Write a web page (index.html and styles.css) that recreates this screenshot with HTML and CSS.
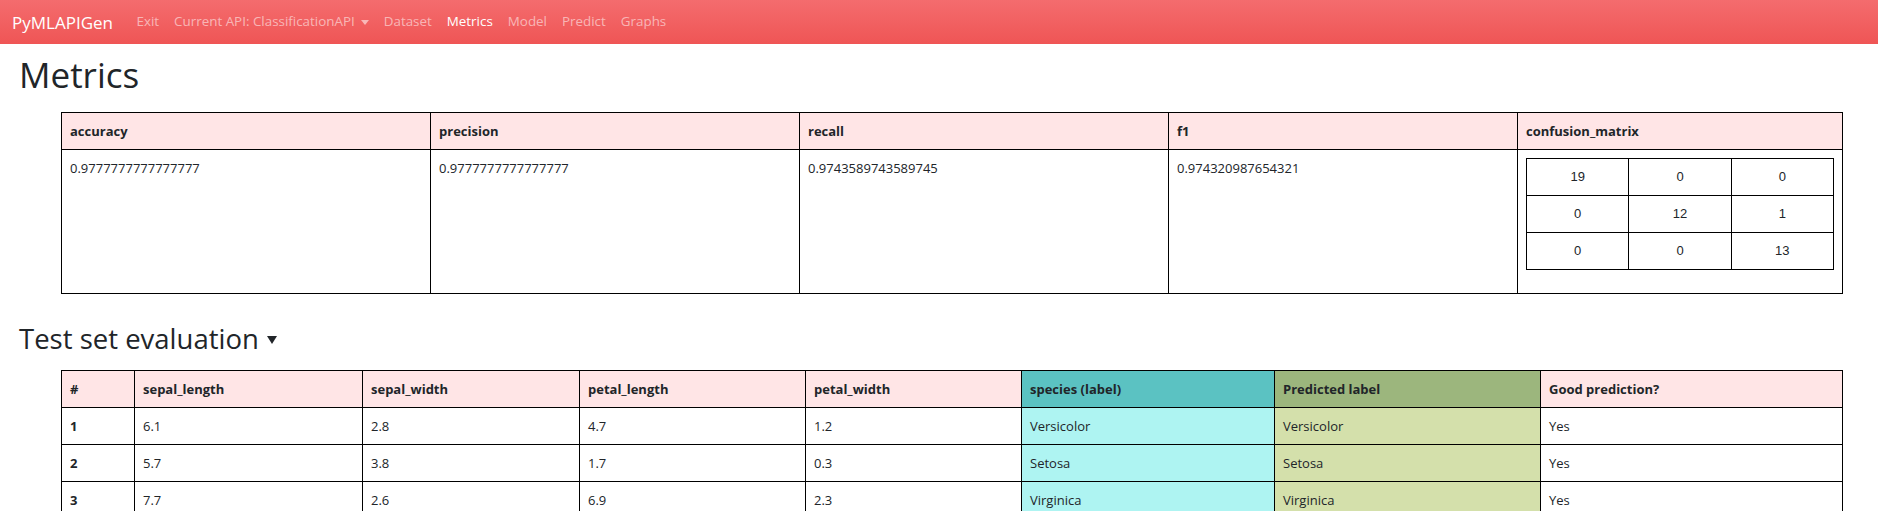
FILE: index.html
```html
<!DOCTYPE html>
<html lang="en">
<head>
<meta charset="utf-8">
<title>PyMLAPIGen - Metrics</title>
<link rel="stylesheet" href="styles.css">
</head>
<body>
<nav class="navbar">
  <a class="brand" href="#">PyMLAPIGen</a>
  <ul class="nav">
    <li><a class="nav-link" href="#">Exit</a></li>
    <li><a class="nav-link dropdown-toggle" href="#">Current API: ClassificationAPI</a></li>
    <li><a class="nav-link" href="#">Dataset</a></li>
    <li><a class="nav-link active" href="#">Metrics</a></li>
    <li><a class="nav-link" href="#">Model</a></li>
    <li><a class="nav-link" href="#">Predict</a></li>
    <li><a class="nav-link" href="#">Graphs</a></li>
  </ul>
</nav>
<main class="content">
  <h1 class="page-title">Metrics</h1>
  <table class="grid metrics">
    <colgroup>
      <col class="m-col">
      <col class="m-col">
      <col class="m-col">
      <col class="m-col-f1">
      <col class="m-col-cm">
    </colgroup>
    <thead>
      <tr>
        <th>accuracy</th>
        <th>precision</th>
        <th>recall</th>
        <th>f1</th>
        <th>confusion_matrix</th>
      </tr>
    </thead>
    <tbody>
      <tr>
        <td>0.9777777777777777</td>
        <td>0.9777777777777777</td>
        <td>0.9743589743589745</td>
        <td>0.974320987654321</td>
        <td>
          <table class="confusion">
            <tbody>
              <tr><td>19</td><td>0</td><td>0</td></tr>
              <tr><td>0</td><td>12</td><td>1</td></tr>
              <tr><td>0</td><td>0</td><td>13</td></tr>
            </tbody>
          </table>
        </td>
      </tr>
    </tbody>
  </table>

  <h2 class="section-title">Test set evaluation <span class="toggle-caret"></span></h2>
  <table class="grid evaluation">
    <colgroup>
      <col class="e-idx">
      <col class="e-sl">
      <col class="e-sw">
      <col class="e-pl">
      <col class="e-pw">
      <col class="e-sp">
      <col class="e-pred">
      <col class="e-good">
    </colgroup>
    <thead>
      <tr>
        <th>#</th>
        <th>sepal_length</th>
        <th>sepal_width</th>
        <th>petal_length</th>
        <th>petal_width</th>
        <th class="label-head">species (label)</th>
        <th class="pred-head">Predicted label</th>
        <th>Good prediction?</th>
      </tr>
    </thead>
    <tbody>
      <tr>
        <th class="row-num">1</th>
        <td>6.1</td><td>2.8</td><td>4.7</td><td>1.2</td>
        <td class="label-cell">Versicolor</td>
        <td class="pred-cell">Versicolor</td>
        <td>Yes</td>
      </tr>
      <tr>
        <th class="row-num">2</th>
        <td>5.7</td><td>3.8</td><td>1.7</td><td>0.3</td>
        <td class="label-cell">Setosa</td>
        <td class="pred-cell">Setosa</td>
        <td>Yes</td>
      </tr>
      <tr>
        <th class="row-num">3</th>
        <td>7.7</td><td>2.6</td><td>6.9</td><td>2.3</td>
        <td class="label-cell">Virginica</td>
        <td class="pred-cell">Virginica</td>
        <td>Yes</td>
      </tr>
    </tbody>
  </table>
</main>
</body>
</html>
```
FILE: styles.css
```css
* { box-sizing: border-box; }

html, body {
  margin: 0;
  padding: 0;
  background: #fff;
}

body {
  font-family: "Open Sans", "Noto Sans", Arial, sans-serif;
  color: #212529;
  font-size: 15px;
  line-height: 1.5;
}

/* ---------- navbar ---------- */
.navbar {
  display: flex;
  align-items: center;
  height: 44px;
  padding: 0 12px;
  background: linear-gradient(to bottom, #f46c6e 0%, #ef5555 100%);
}

.brand {
  color: #fff;
  font-size: 17px;
  text-decoration: none;
  margin-right: 16px;
  line-height: 1;
}

.nav {
  display: flex;
  list-style: none;
  margin: 0;
  padding: 0;
}

.nav-link {
  display: flex;
  align-items: center;
  padding: 0 7.5px;
  font-size: 13.4px;
  color: rgba(255, 255, 255, 0.55);
  text-decoration: none;
  line-height: 1;
}

.nav-link.active {
  color: #fff;
}

.dropdown-toggle::after {
  content: "";
  display: inline-block;
  margin-left: 6px;
  border-top: 5px solid rgba(255, 255, 255, 0.55);
  border-left: 4px solid transparent;
  border-right: 4px solid transparent;
}

/* ---------- content ---------- */
.content {
  padding: 0 36px 24px 19px;
}

.page-title {
  margin: 8px 0 15px;
  font-size: 35px;
  font-weight: 500;
  line-height: 45px;
}

.section-title {
  margin: 27px 0 13px;
  font-size: 27.5px;
  font-weight: 500;
  line-height: 36px;
  display: flex;
  align-items: center;
}

.toggle-caret {
  display: inline-block;
  margin-left: 8px;
  margin-top: 2px;
  border-top: 8px solid #212529;
  border-left: 5px solid transparent;
  border-right: 5px solid transparent;
}

/* ---------- tables ---------- */
.grid {
  width: calc(100% - 42px);
  margin-left: 42px;
  border-collapse: collapse;
  table-layout: fixed;
  font-size: 13px;
  line-height: 20px;
}

.grid th,
.grid td {
  border: 1px solid #000;
  padding: 8px;
  text-align: left;
  vertical-align: top;
}

.grid thead th {
  background: #ffe5e6;
  font-weight: 700;
}

.grid .row-num {
  font-weight: 700;
  background: #fff;
}

.m-col { width: 369px; }
.m-col-f1 { width: 349px; }
.m-col-cm { width: 325px; }

.e-idx { width: 73px; }
.e-sl { width: 228px; }
.e-sw { width: 217px; }
.e-pl { width: 226px; }
.e-pw { width: 216px; }
.e-sp { width: 253px; }
.e-pred { width: 266px; }
.e-good { width: 302px; }

.grid thead .label-head { background: #5bc2c2; }
.grid thead .pred-head { background: #9cb67d; }
.label-cell { background: #aef4f2; }
.pred-cell { background: #d4e0ab; }

.confusion {
  width: 100%;
  border-collapse: collapse;
  margin-bottom: 15px;
  font-family: "Liberation Sans", Arial, sans-serif;
  font-size: 13px;
  line-height: 20px;
}

.confusion td {
  border: 1px solid #000;
  padding: 8px;
  text-align: center;
  width: 33.33%;
}
```
